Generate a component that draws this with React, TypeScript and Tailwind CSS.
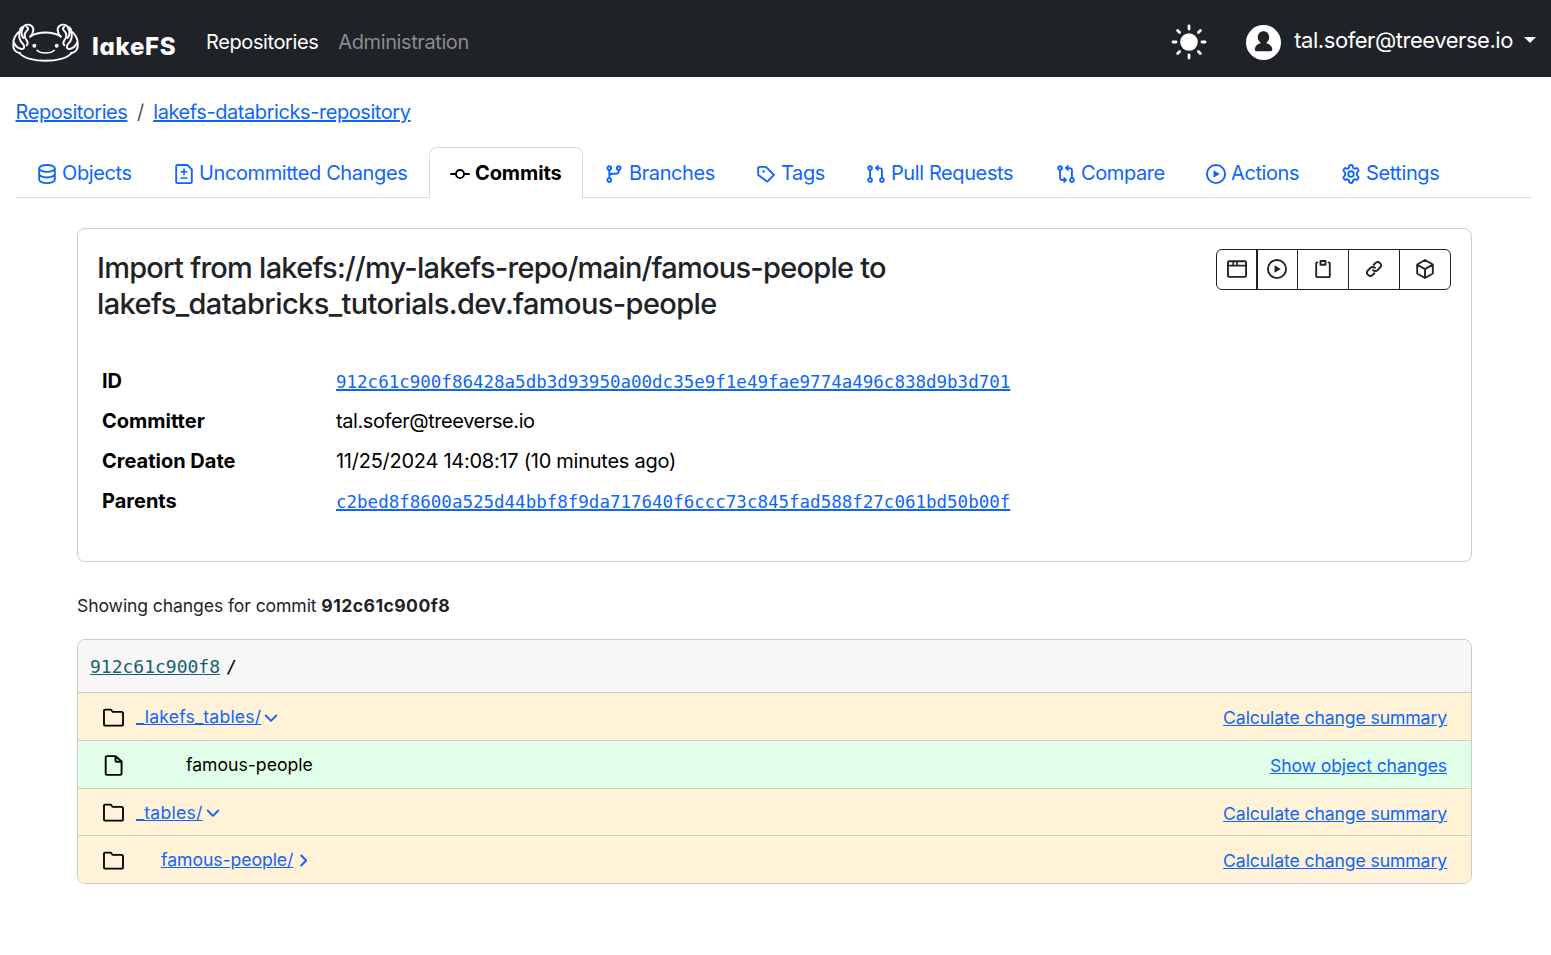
import type { ReactNode } from "react";

function Icon({ className = "size-5", children }: { className?: string; children: ReactNode }) {
  return (
    <svg viewBox="0 0 16 16" className={`${className} shrink-0`} fill="none" stroke="currentColor" strokeWidth={1.5} strokeLinejoin="round">
      {children}
    </svg>
  );
}

const Database = () => (
  <Icon>
    <ellipse cx="8" cy="3.5" rx="6.25" ry="2.75" />
    <path d="M1.75 3.5v9c0 1.5 2.8 2.75 6.25 2.75s6.25-1.25 6.25-2.75v-9M1.75 8c0 1.5 2.8 2.75 6.25 2.75S14.25 9.5 14.25 8" />
  </Icon>
);
const FileDiff = () => (
  <Icon>
    <path d="M10.6.75H2.75a1 1 0 0 0-1 1v12.5a1 1 0 0 0 1 1h10.5a1 1 0 0 0 1-1V4.4z" />
    <path d="M8 4v4.4M5.8 6.2h4.4M5.8 11.2h4.4" strokeLinecap="round" strokeWidth="1.35" />
  </Icon>
);
const Commit = () => (
  <Icon>
    <circle cx="8" cy="8" r="3.25" />
    <path d="M.75 8h4M11.25 8h4" strokeLinecap="round" />
  </Icon>
);
const Branch = () => (
  <Icon>
    <circle cx="4.25" cy="3.25" r="1.5" />
    <circle cx="4.25" cy="12.75" r="1.5" />
    <circle cx="11.75" cy="3.25" r="1.5" />
    <path d="M4.25 4.75v6.5M11.75 4.75v.75A2.25 2.25 0 0 1 9.5 7.75h-3A2.25 2.25 0 0 0 4.25 10" />
  </Icon>
);
const Tag = () => (
  <Icon>
    <path d="M1.75 8.25v-5.5a1 1 0 0 1 1-1h5.03a.25.25 0 0 1 .177.073l6.25 6.25a.25.25 0 0 1 0 .354l-5.025 5.025a.25.25 0 0 1-.354 0L1.75 8.25z" transform="translate(0 .5)" />
    <circle cx="6" cy="6" r=".95" fill="currentColor" stroke="none" />
  </Icon>
);
const Pull = () => (
  <Icon>
    <circle cx="3.25" cy="3.25" r="1.5" />
    <circle cx="3.25" cy="12.75" r="1.5" />
    <circle cx="12.75" cy="12.75" r="1.5" />
    <path d="M3.25 4.75v6.5M12.75 11.25V5A1.75 1.75 0 0 0 11 3.25H9" />
    <path d="M9.573.677 7.177 3.073a.25.25 0 0 0 0 .354l2.396 2.396A.25.25 0 0 0 10 5.646V.854a.25.25 0 0 0-.427-.177z" fill="currentColor" stroke="none" />
  </Icon>
);
const Compare = () => (
  <Icon>
    <circle cx="3.25" cy="3.25" r="1.5" />
    <circle cx="12.75" cy="12.75" r="1.5" />
    <path d="M3.25 4.75V11A1.75 1.75 0 0 0 5 12.75h2M12.75 11.25V5A1.75 1.75 0 0 0 11 3.25H9" />
    <path d="M9.573.677 7.177 3.073a.25.25 0 0 0 0 .354l2.396 2.396A.25.25 0 0 0 10 5.646V.854a.25.25 0 0 0-.427-.177zM6.427 15.323l2.396-2.396a.25.25 0 0 0 0-.354l-2.396-2.396a.25.25 0 0 0-.427.177v4.792c0 .223.27.335.427.177z" fill="currentColor" stroke="none" />
  </Icon>
);
const Play = () => (
  <Icon>
    <circle cx="8" cy="8" r="7.25" />
    <path d="M6 5.442v5.117a.25.25 0 0 0 .379.214l4.264-2.559a.25.25 0 0 0 0-.428L6.379 5.227A.25.25 0 0 0 6 5.442z" fill="currentColor" stroke="none" />
  </Icon>
);
const Gear = () => (
  <Icon>
    <circle cx="8" cy="8" r="2.25" />
    <path d="M6.7 1.3Q8 .4 9.3 1.3L9.75 3.15 10.85 3.8 12.7 3.25Q14 4 14.1 5.4L12.7 7V9L14.1 10.6Q14 12 12.7 12.75L10.85 12.2 9.75 12.85 9.3 14.7Q8 15.6 6.7 14.7L6.25 12.85 5.15 12.2 3.3 12.75Q2 12 1.9 10.6L3.3 9V7L1.9 5.4Q2 4 3.3 3.25L5.15 3.8 6.25 3.15z" />
  </Icon>
);
const Browser = () => (
  <Icon>
    <rect x=".75" y="1.75" width="14.5" height="12.5" rx="1" />
    <path d="M.75 5.25h14.5M5 2v3M8 2v3" strokeWidth="1.3" />
  </Icon>
);
const Paste = () => (
  <Icon className="size-[18px]">
    <rect x="5.75" y=".85" width="4.5" height="3.4" rx=".3" strokeWidth="1.7" />
    <path d="M2.9 2.1a1 1 0 0 0-.95 1v11.15a1 1 0 0 0 1 1h10.1a1 1 0 0 0 1-1V3.1a1 1 0 0 0-.95-1" strokeLinecap="round" strokeWidth="1.65" />
  </Icon>
);
const LinkIcon = () => (
  <Icon className="size-[18px]">
    <path d="m7.75 4.2 1.85-1.85a2.95 2.95 0 0 1 4.1 4.1l-2.5 2.5a2.85 2.85 0 0 1-4.1 0M8.25 11.8l-1.85 1.85a2.95 2.95 0 0 1-4.1-4.1l2.5-2.5a2.85 2.85 0 0 1 4.1 0" strokeLinecap="round" strokeWidth="1.65" />
  </Icon>
);
const Cube = () => (
  <Icon>
    <path d="m8 .85 6.25 3.6v7.1L8 15.15l-6.25-3.6v-7.1zM1.9 4.6 8 8.1l6.1-3.5M8 8.1V15" />
  </Icon>
);
const Folder = () => (
  <Icon className="h-[21px] w-[21px]">
    <path d="M.75 2.45v10.8a1 1 0 0 0 1 1h12.5a1 1 0 0 0 1-1v-8.5a1 1 0 0 0-1-1H7.5a.3.3 0 0 1-.2-.1l-.9-1.2a1 1 0 0 0-.8-.4H1.75a1 1 0 0 0-1 .7z" strokeWidth="1.4" />
  </Icon>
);
const FileIcon = () => (
  <Icon className="h-[21px] w-[21px]">
    <path d="M9.6.85H3.05a1 1 0 0 0-1 1v12.3a1 1 0 0 0 1 1h10.1a1 1 0 0 0 1-1V5zM9.5 1v3.2a1 1 0 0 0 1 1H14" strokeWidth="1.45" />
  </Icon>
);

function LogoSide() {
  return (
    <g>
      <path d="M67 62C76 52 80 38 71 30 63 24 52 25 45 33 39 34 36 40 35 46 22 55 14 72 16 86 14 98 22 110 36 111" />
      <path d="M56 33C62 35 61 41 56 45 47 54 49 64 56 73 60 79 59 85 56 88" />
      <path d="M36 48C31 60 34 73 45 84 50 90 50 96 44 99" />
      <path d="M45 36C40 44 39 56 46 66" />
      <path d="M18 80C22 90 30 97 40 99" />
    </g>
  );
}

function Logo() {
  return (
    <svg viewBox="9 21 207 120" className="h-10 w-[69px] shrink-0" fill="none" stroke="white" strokeWidth="5.8" strokeLinecap="round" strokeLinejoin="round">
      <LogoSide />
      <g transform="translate(225 0) scale(-1 1)">
        <LogoSide />
      </g>
      <path d="M67 61C92 46 133 46 158 61M34 111C58 142 167 142 191 111" />
      <path d="M87 103C97 114 128 114 139 103" strokeWidth="4.5" />
      <circle cx="79" cy="89" r="6" fill="white" stroke="none" />
      <circle cx="146" cy="89" r="6" fill="white" stroke="none" />
    </svg>
  );
}

const Sun = () => (
  <svg viewBox="-18 -18 36 36" className="size-9 shrink-0" fill="white" stroke="white" strokeWidth="2.8" strokeLinecap="round">
    <circle r="8.8" stroke="none" />
    <path d="M0-16v3M0 13v3M-16 0h3M13 0h3M-11.4-11.4l2 2M9.4 9.4l2 2M-11.4 11.4l2-2M9.4-9.4l2-2" />
  </svg>
);

const Avatar = () => (
  <svg viewBox="0 0 35 35" className="size-[35px] shrink-0">
    <circle cx="17.5" cy="17.5" r="17.5" fill="white" />
    <path d="M17.5 6.2c3.500 0 5.700 2.700 5.700 5.900 0 2.500-1.100 4.500-2.700 5.500v.7c3.300.8 5.400 3 5.700 5.400.2 1.700-.6 2.500-1.900 2.500H10.700c-1.300 0-2.100-.8-1.900-2.500.3-2.400 2.400-4.600 5.700-5.400v-.7c-1.600-1-2.700-3-2.700-5.500 0-3.200 2.200-5.900 5.700-5.900z" fill="#1f2227" />
  </svg>
);

const tabs: { name: string; icon: ReactNode; width: string; active?: boolean }[] = [
  { name: "Objects", icon: <Database />, width: "w-[137px]" },
  { name: "Uncommitted Changes", icon: <FileDiff />, width: "w-[276px]" },
  { name: "Commits", icon: <Commit />, width: "w-[154px]", active: true },
  { name: "Branches", icon: <Branch />, width: "w-[152px]" },
  { name: "Tags", icon: <Tag />, width: "w-[110px]" },
  { name: "Pull Requests", icon: <Pull />, width: "w-[190px]" },
  { name: "Compare", icon: <Compare />, width: "w-[150px]" },
  { name: "Actions", icon: <Play />, width: "w-[135px]" },
  { name: "Settings", icon: <Gear />, width: "w-[142px]" },
];

const details: { label: string; value: string; tracking?: string; hash?: boolean }[] = [
  { label: "ID", value: "912c61c900f86428a5db3d93950a00dc35e9f1e49fae9774a496c838d9b3d701", hash: true },
  { label: "Committer", value: "tal.sofer@treeverse.io", tracking: "tracking-[-0.42px]" },
  { label: "Creation Date", value: "11/25/2024 14:08:17 (10 minutes ago)", tracking: "tracking-[-0.26px]" },
  { label: "Parents", value: "c2bed8f8600a525d44bbf8f9da717640f6ccc73c845fad588f27c061bd50b00f", hash: true },
];

const actions: { icon: ReactNode; style: string }[] = [
  { icon: <Browser />, style: "w-10 border-r" },
  { icon: <Play />, style: "w-[41px] border-x pr-0.5" },
  { icon: <Paste />, style: "w-[51px] border-r" },
  { icon: <LinkIcon />, style: "w-[51px] border-r" },
  { icon: <Cube />, style: "w-[50px]" },
];

type RowProps = { indent?: string; name: string; tracking?: string; kind: "dir" | "file"; open?: boolean; height: string; action: string };

function Row({ indent = "", name, tracking = "", kind, open, height, action }: RowProps) {
  const dir = kind === "dir";
  return (
    <div className={`flex items-center border-b border-[#d6cebb] pr-6 pl-[25px] text-[17.6px] last:border-b-0 ${height} ${dir ? "bg-[#fff2d6]" : "bg-[#e1ffe8]"}`}>
      <span className="w-[33px] pt-px text-black">{dir ? <Folder /> : <FileIcon />}</span>
      <span className={`flex items-center pt-0.5 ${indent}`}>
        {dir ? <a className={`text-[#0f65fa] underline ${tracking}`}>{name}</a> : <span className="text-black">{name}</span>}
        {dir && (
          <svg viewBox="0 0 20 20" className="size-5 text-[#0f65fa]" fill="none" stroke="currentColor" strokeWidth="1.9" strokeLinecap="round" strokeLinejoin="round">
            <path d={open ? "m4.7 7.5 5.3 5.3 5.3-5.3" : "m8.2 4.500 5 5-5 5"} />
          </svg>
        )}
      </span>
      <a className="ml-auto pt-1 tracking-[-0.1px] text-[#0f65fa] underline">{action}</a>
    </div>
  );
}

export default function App() {
  return (
    <div className="min-h-[955px] bg-white font-['Inter',sans-serif] text-xl text-[#1f2328]">
      <header className="flex h-[77px] items-center bg-[#1f2227] pr-[15px] pl-[11px] text-white">
        <div className="pt-2">
          <Logo />
        </div>
        <span className="mt-[17px] ml-3 w-[84px] text-2xl leading-7 font-extrabold tracking-[0.7px] [font-feature-settings:'cv11']">lakeFS</span>
        <nav className="ml-[30px] flex gap-5 pt-1.5 tracking-[-0.4px]">
          <span>Repositories</span>
          <span className="text-[#8b8d90]">Administration</span>
        </nav>
        <div className="ml-auto flex items-center">
          <div className="mr-[39px] pt-1.5">
            <Sun />
          </div>
          <div className="pt-2">
            <Avatar />
          </div>
          <span className="ml-[13px] pt-1 text-[22px] tracking-[-0.45px]">tal.sofer@treeverse.io</span>
          <svg viewBox="0 0 12 6" className="mt-[3px] ml-[11px] h-1.5 w-3" fill="white">
            <path d="M0 0h12L6 6z" />
          </svg>
        </div>
      </header>

      <div className="flex h-[70px] items-center pl-[15.5px] tracking-[-0.43px]">
        <a className="text-[#0f65fa] underline decoration-[1.6px]">Repositories</a>
        <span className="px-[9.5px] text-[#54585c]">/</span>
        <a className="text-[#0f65fa] underline decoration-[1.6px]">lakefs-databricks-repository</a>
      </div>

      <div className="mr-[19px] ml-4 flex h-[51px] border-b border-[#d9dcdf]">
        {tabs.map((t) => (
          <div
            key={t.name}
            className={`flex h-[51px] items-center gap-[5px] pl-5 whitespace-nowrap ${t.width} ${
              t.active ? "rounded-t-lg border border-b-0 border-[#d9dcdf] bg-white font-bold tracking-[-0.1px] text-black" : "border border-transparent tracking-[-0.4px] text-[#0f65fa]"
            }`}
          >
            <span className="pt-0.5">{t.icon}</span>
            <span>{t.name}</span>
          </div>
        ))}
      </div>

      <main className="mr-[79px] ml-[77px] pt-[30px]">
        <section className="h-[334px] rounded-lg border border-[#cbccce] pt-5 pr-5 pl-[19px]">
          <div className="flex items-start justify-between">
            <h1 className="w-[860px] pt-px text-[29px] leading-9 font-medium">
              <span className="tracking-[-0.75px]">Import from lakefs://my-lakefs-repo/main/famous-people to</span>
              <br />
              <span className="tracking-[-0.61px]">lakefs_databricks_tutorials.dev.famous-people</span>
            </h1>
            <div className="flex h-[41px] rounded-md border border-[#1f2328]">
              {actions.map((a, i) => (
                <button key={i} className={`flex items-center justify-center border-[#1f2328] pb-px ${a.style}`}>
                  {a.icon}
                </button>
              ))}
            </div>
          </div>
          <dl className="pt-[39px] text-black">
            {details.map((d) => (
              <div key={d.label} className="flex h-10 items-center pl-[5px]">
                <dt className="w-[234px] font-bold">{d.label}</dt>
                {d.hash ? (
                  <dd className="pt-0.5 font-['DejaVu_Sans_Mono',monospace] text-[17.5px] text-[#0f65fa] underline decoration-[1.6px]">{d.value}</dd>
                ) : (
                  <dd className={d.tracking}>{d.value}</dd>
                )}
              </div>
            ))}
          </dl>
        </section>

        <p className="flex h-[77px] items-center pt-[11px] text-[17.6px] whitespace-pre">
          <span className="tracking-[-0.11px]">Showing changes for commit </span>
          <strong className="font-bold tracking-[0.45px]">912c61c900f8</strong>
        </p>

        <section className="overflow-hidden rounded-lg border border-[#cbccce]">
          <div className="flex h-[53px] items-center border-b border-[#cbccce] bg-[#f7f7f8] pt-0.5 pl-3 font-['DejaVu_Sans_Mono',monospace] text-lg">
            <a className="text-[#18606b] underline">912c61c900f8</a>
            <span className="pl-1.5 text-black">/</span>
          </div>
          <Row name="_lakefs_tables/" tracking="tracking-[0.2px]" kind="dir" open height="h-12" action="Calculate change summary" />
          <Row indent="ml-[50px]" name="famous-people" kind="file" height="h-12" action="Show object changes" />
          <Row name="_tables/" tracking="tracking-[0.25px]" kind="dir" open height="h-[47px]" action="Calculate change summary" />
          <Row indent="ml-[25px]" name="famous-people/" tracking="tracking-[-0.05px]" kind="dir" height="h-[47px]" action="Calculate change summary" />
        </section>
      </main>
    </div>
  );
}
